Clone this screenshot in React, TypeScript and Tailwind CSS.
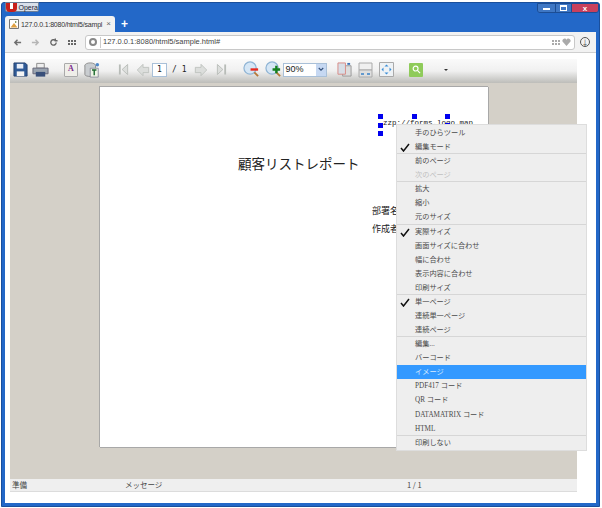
import React from "react";

const menuGroups = [
  [{ label: "手のひらツール" }, { label: "編集モード", checked: true }],
  [{ label: "前のページ" }, { label: "次のページ", disabled: true }],
  [{ label: "拡大" }, { label: "縮小" }, { label: "元のサイズ" }],
  [
    { label: "実際サイズ", checked: true },
    { label: "画面サイズに合わせ" },
    { label: "幅に合わせ" },
    { label: "表示内容に合わせ" },
    { label: "印刷サイズ" },
  ],
  [{ label: "単一ページ", checked: true }, { label: "連続単一ページ" }, { label: "連続ページ" }],
  [
    { label: "編集..." },
    { label: "バーコード" },
    { label: "イメージ", active: true },
    { label: "PDF417 コード" },
    { label: "QR コード" },
    { label: "DATAMATRIX コード" },
    { label: "HTML" },
  ],
  [{ label: "印刷しない" }],
];

type Item = { label: string; checked?: boolean; disabled?: boolean; active?: boolean };

const MenuRow = ({ item }: { item: Item }) => (
  <div
    className={`relative h-[14.09px] pl-[18px] text-[7.2px] leading-[14px] whitespace-nowrap ${
      item.active ? "bg-[#3399ff] text-[#d8ebff]" : item.disabled ? "text-[#c0c0c0]" : "text-[#4a4a4a]"
    }`}
  >
    {item.checked && (
      <svg viewBox="0 0 10 9" className="absolute left-[3px] top-[3px] w-[10px] h-[9px]">
        <path d="M1 5l2.5 3L9 1" fill="none" stroke="#111" strokeWidth="1.5" />
      </svg>
    )}
    {item.label}
  </div>
);

const Handle = ({ className }: { className: string }) => (
  <div className={`absolute w-[5px] h-[5px] bg-[#0000ee] ${className}`} />
);

const Arrow = ({ flip }: { flip?: boolean }) => (
  <svg viewBox="0 0 16 16" className={`w-[14px] h-[14px] ${flip ? "-scale-x-100" : ""}`}>
    <path d="M8 1.500L1.500 8 8 14.500V11h6.500V5H8z" fill="#dcdedc" stroke="#bcc0bc" />
  </svg>
);

const EndArrow = ({ flip }: { flip?: boolean }) => (
  <svg viewBox="0 0 12 14" className={`w-[11px] h-[13px] ${flip ? "-scale-x-100" : ""}`}>
    <path d="M2 1.500v11" stroke="#b8bcb8" strokeWidth="2" />
    <path d="M10.500 1.500L4.500 7l6 5.500z" fill="#dcdedc" stroke="#b8bcb8" />
  </svg>
);

const Zoom = ({ plus }: { plus?: boolean }) => (
  <svg viewBox="0 0 18 18" className="w-[17px] h-[17px]">
    <circle cx="7.500" cy="7.500" r="6.500" fill="#d5e6f5" stroke="#8fb4d4" strokeWidth="1.300" />
    <path d="M12 12l4 4" stroke="#b5793a" strokeWidth="2" />
    {plus ? (
      <path d="M12 5v8M8 9h8" stroke="#15801f" strokeWidth="2.500" />
    ) : (
      <path d="M8 9h8" stroke="#e8271c" strokeWidth="2.500" />
    )}
  </svg>
);

export default function App() {
  return (
    <div className="w-[602px] h-[508px] bg-white font-['Noto_Sans_CJK_JP',sans-serif] overflow-hidden pl-[1px] pt-[2px]">
      <div className="w-[599px] h-[505px] bg-[#2368c8] border border-[#1a4f9c] rounded-t-[3px] flex flex-col relative">
        {/* title bar */}
        <div className="h-[29px] shrink-0 relative">
          <div className="absolute left-[3px] top-[-1px] w-[34px] h-[10px] bg-[#d9e0ea] border border-[#6d7f98] rounded-b-[2px] flex items-center">
            <div className="w-[11px] h-[9px] bg-[#c8201c] rounded-b-[4px] flex justify-center">
              <div className="w-[3px] h-[6px] bg-white" />
            </div>
            <span className="text-[7px] leading-none text-[#223] ml-[2px] font-['Liberation_Sans',sans-serif]">Opera</span>
          </div>
          <div className="absolute right-[0px] top-[0px] h-[10px] flex border border-[#1c4d94] rounded-b-[3px] overflow-hidden">
            <div className="w-[17px] bg-[#3f77c4] flex items-end justify-center pb-[2px]">
              <div className="w-[7px] h-[2px] bg-white" />
            </div>
            <div className="w-[16px] bg-[#3f77c4] border-l border-[#1c4d94] flex items-center justify-center">
              <div className="w-[7px] h-[6px] border border-white border-t-2" />
            </div>
            <div className="w-[27px] bg-[#c9405c] border-l border-[#1c4d94] text-white text-[8px] leading-[9px] font-bold text-center font-['Liberation_Sans',sans-serif]">
              x
            </div>
          </div>
          <div className="absolute left-[3px] bottom-0 w-[110px] h-[16px] bg-[#f2f2f2] rounded-t-[3px] flex items-center pl-[4px] pr-[4px]">
            <svg viewBox="0 0 10 10" className="w-[10px] h-[10px] shrink-0">
              <path d="M.5.5h9v9h-9z" fill="#fff" stroke="#777" />
              <path d="M1.500 8.500L5 4l3.500 4.500z" fill="#e0a040" />
              <path d="M6 2l2 1-2 1z" fill="#5a7a30" />
            </svg>
            <span className="text-[7px] tracking-[-0.2px] leading-none text-[#333] ml-[2px] whitespace-nowrap font-['Liberation_Sans',sans-serif]">
              127.0.0.1:8080/html5/sampl
            </span>
            <span className="text-[8px] leading-none text-[#666] ml-auto font-['Liberation_Sans',sans-serif]">×</span>
          </div>
          <span className="absolute left-[119px] bottom-[1px] text-white text-[12px] leading-[14px] font-bold font-['Liberation_Sans',sans-serif]">+</span>
        </div>

        {/* browser toolbar */}
        <div className="h-[21px] shrink-0 mx-[3px] bg-[#f2f2f2] flex items-center pl-[8px] pr-[6px] border-b border-[#cfcfcf] text-[#777]">
          <svg viewBox="0 0 10 10" className="w-[9px] h-[9px]">
            <path d="M9 5H2M5 2L2 5l3 3" fill="none" stroke="#6f6f6f" strokeWidth="1.600" />
          </svg>
          <svg viewBox="0 0 10 10" className="w-[9px] h-[9px] ml-[9px]">
            <path d="M1 5h7M5 2l3 3-3 3" fill="none" stroke="#b5b5b5" strokeWidth="1.600" />
          </svg>
          <svg viewBox="0 0 10 10" className="w-[9px] h-[9px] ml-[9px]">
            <path d="M8 5a3 3 0 1 1-1-2.300M7 .5v2.500H9.500" fill="none" stroke="#666" strokeWidth="1.500" />
          </svg>
          <div className="grid grid-cols-3 gap-[1px] ml-[10px]">
            {[0, 1, 2, 3, 4, 5].map((i) => (
              <div key={i} className="w-[2px] h-[2px] bg-[#666]" />
            ))}
          </div>
          <div className="ml-[9px] h-[15px] w-[490px] bg-white border border-[#c8c8c8] rounded-[3px] flex items-center pl-[3px] pr-[3px]">
            <div className="w-[8px] h-[8px] rounded-full border-2 border-[#888] shrink-0" />
            <div className="w-px h-[11px] bg-[#ccc] ml-[3px] mr-[2px]" />
            <span className="text-[7.5px] leading-none text-[#444] font-['Liberation_Sans',sans-serif]">127.0.0.1:8080/html5/sample.html#</span>
            <div className="ml-auto grid grid-cols-3 gap-[1px]">
              {[0, 1, 2, 3, 4, 5].map((i) => (
                <div key={i} className="w-[2px] h-[2px] bg-[#aaa]" />
              ))}
            </div>
            <svg viewBox="0 0 10 9" className="w-[9px] h-[8px] ml-[2px]">
              <path d="M5 9L.5 4C-.5 1.500 3.500-1 5 2c1.500-3 5.500-.5 4.500 2z" fill="#aaa" />
            </svg>
          </div>
          <div className="ml-auto w-[10px] h-[10px] rounded-full border border-[#555] flex items-center justify-center text-[7px] leading-none text-[#555]">↓</div>
        </div>

        {/* page */}
        <div className="mx-[3px] mb-[3px] flex-1 min-h-0 bg-white pl-[5px] pt-[6px] pb-[11px] relative">
          <div className="w-[567px] h-full flex flex-col">
            {/* viewer toolbar */}
            <div className="h-[24px] shrink-0 flex items-center pl-[3px] pb-[3px] bg-gradient-to-b from-[#fafafa] via-[#f0f0f0] to-[#bdbdb9]">
              <svg viewBox="0 0 16 16" className="w-[15px] h-[15px]">
                <path d="M1 1h12l2 2v12H1z" fill="#2f5a96" stroke="#23406e" />
                <path d="M4 2h7v5H4z" fill="#e8eef8" />
                <path d="M4 10h8v5H4z" fill="#f4f4f4" />
              </svg>
              <svg viewBox="0 0 18 16" className="w-[17px] h-[16px] ml-[4px]">
                <path d="M5 1h8v5H5z" fill="#eee" stroke="#888" />
                <path d="M1 6h16v6H1z" fill="#9aa4b0" stroke="#667" />
                <path d="M4 10h10v5H4z" fill="#39507a" />
              </svg>
              <div className="ml-[15px] w-[14px] h-[14px] bg-[#efeee9] border border-[#aaa] rounded-[1px] text-[8px] leading-[10px] font-bold text-[#7a2a8c] text-center font-['Liberation_Serif',serif]">
                A
              </div>
              <svg viewBox="0 0 18 18" className="w-[16px] h-[16px] ml-[6px]">
                <ellipse cx="7" cy="4" rx="6" ry="3" fill="#c9cdd0" stroke="#888" />
                <path d="M1 4v10c0 3 12 3 12 0V4" fill="#c9cdd0" stroke="#888" />
                <path d="M7 7h9v10H7z" fill="#eef3e6" stroke="#889" />
                <path d="M9 9h5M11.500 9v6" stroke="#1f6b30" strokeWidth="1.600" />
                <circle cx="15" cy="3" r="2" fill="#4f88c8" />
              </svg>
              <div className="ml-[18px] flex items-center">
                <EndArrow />
                <div className="ml-[7px]">
                  <Arrow />
                </div>
                <div className="ml-[2px] w-[15px] h-[14px] bg-white border border-[#a9c0d8] text-[8px] leading-[12px] text-center text-[#222] font-['DejaVu_Sans_Mono',monospace]">
                  1
                </div>
                <span className="ml-[5px] text-[8px] leading-none text-[#222] font-['DejaVu_Sans_Mono',monospace] whitespace-nowrap">/ 1</span>
                <div className="ml-[8px]">
                  <Arrow flip />
                </div>
                <div className="ml-[8px]">
                  <EndArrow flip />
                </div>
              </div>
              <div className="ml-[16px]">
                <Zoom />
              </div>
              <div className="ml-[5px]">
                <Zoom plus />
              </div>
              <div className="ml-[1px] w-[44px] h-[14px] bg-white border border-[#a9c0d8] flex items-center justify-between text-[9px] leading-none text-[#222] pl-[1px] font-['Liberation_Sans',sans-serif]">
                90%
                <div className="w-[10px] h-full bg-[#c6d8f2] flex items-center justify-center">
                  <svg viewBox="0 0 8 6" className="w-[6px] h-[5px]">
                    <path d="M1 1l3 3 3-3" fill="none" stroke="#33507a" strokeWidth="1.500" />
                  </svg>
                </div>
              </div>
              <svg viewBox="0 0 16 16" className="w-[15px] h-[15px] ml-[10px]">
                <path d="M6 4h9v11H6z" fill="#ddd" stroke="#999" />
                <path d="M1 1h8v12H1z" fill="#d8dee6" stroke="#d88a84" />
                <path d="M11 1h3v2h-3z" fill="#3a72b8" />
              </svg>
              <svg viewBox="0 0 15 16" className="w-[15px] h-[16px] ml-[6px]">
                <path d="M1 1h13v7H1z" fill="#f0f0f0" stroke="#aaa" />
                <path d="M1 8h13v7H1z" fill="#dfdfdf" stroke="#aaa" />
                <path d="M3 12h3M9 12h3" stroke="#3a82c8" strokeWidth="1.500" />
              </svg>
              <svg viewBox="0 0 15 15" className="w-[15px] h-[15px] ml-[6px]">
                <path d="M.5.5h14v14H.5z" fill="#eef2f5" stroke="#aaa" />
                <path d="M7.500 2.500l2 2h-4zM7.500 12.500l2-2h-4zM2.500 7.500l2-2v4zM12.500 7.500l-2-2v4z" fill="#3a8ed8" />
              </svg>
              <div className="ml-[15px] w-[14px] h-[14px] bg-[#8fcb5a] rounded-[1px] flex items-center justify-center">
                <svg viewBox="0 0 10 10" className="w-[9px] h-[9px]">
                  <circle cx="4" cy="4" r="2.700" fill="none" stroke="#fff" strokeWidth="1.300" />
                  <path d="M6 6l3 3" stroke="#fff" strokeWidth="1.300" />
                </svg>
              </div>
              <div className="ml-[21px] w-0 h-0 border-x-[2px] border-x-transparent border-t-[2px] border-t-[#333]" />
            </div>

            {/* gray area */}
            <div className="flex-1 min-h-0 bg-[#d4d0c8] pt-[3px] pl-[89px]">
              <div className="relative w-[389px] h-[361px] bg-white border-l border-t border-[#a8a8a8] shadow-[1px_1px_0_#a8a8a8] text-[#222]">
                <span className="absolute left-[138px] top-[66px] text-[13.5px] leading-[20px] whitespace-nowrap">
                  顧客リストレポート
                </span>
                <span className="absolute left-[272px] top-[117px] text-[9px] leading-[13px]">部署名</span>
                <span className="absolute left-[272px] top-[135px] text-[9px] leading-[13px]">作成者</span>
                <span className="absolute left-[283px] top-[31px] text-[7.5px] leading-[11px] font-['Liberation_Mono',monospace] whitespace-nowrap">
                  zzp://forms.logo.map
                </span>
                <Handle className="left-[278px] top-[27px]" />
                <Handle className="left-[312px] top-[27px]" />
                <Handle className="left-[345px] top-[27px]" />
                <Handle className="left-[278px] top-[36px]" />
                <Handle className="left-[345px] top-[36px]" />
                <Handle className="left-[278px] top-[44px]" />
              </div>
            </div>

            {/* status bar */}
            <div className="h-[13px] shrink-0 bg-[#efefef] border-b border-[#dcdcdc] flex items-center text-[7.5px] leading-none text-[#444] pl-[2px]">
              <span className="w-[113px]">準備</span>
              <span className="w-[282px]">メッセージ</span>
              <span>1 / 1</span>
            </div>
          </div>

          {/* context menu */}
          <div className="absolute left-[391px] top-[71px] w-[191px] pt-[1px] bg-[#eeeeee] border border-[#dddddd] font-['Liberation_Serif','Noto_Sans_CJK_JP',serif]">
            {menuGroups.map((group, i) => (
              <div key={i} className={i > 0 ? "relative -mt-px border-t border-[#d6d6d6]" : ""}>
                {group.map((item) => (
                  <MenuRow key={item.label} item={item} />
                ))}
              </div>
            ))}
          </div>
        </div>
      </div>
    </div>
  );
}
